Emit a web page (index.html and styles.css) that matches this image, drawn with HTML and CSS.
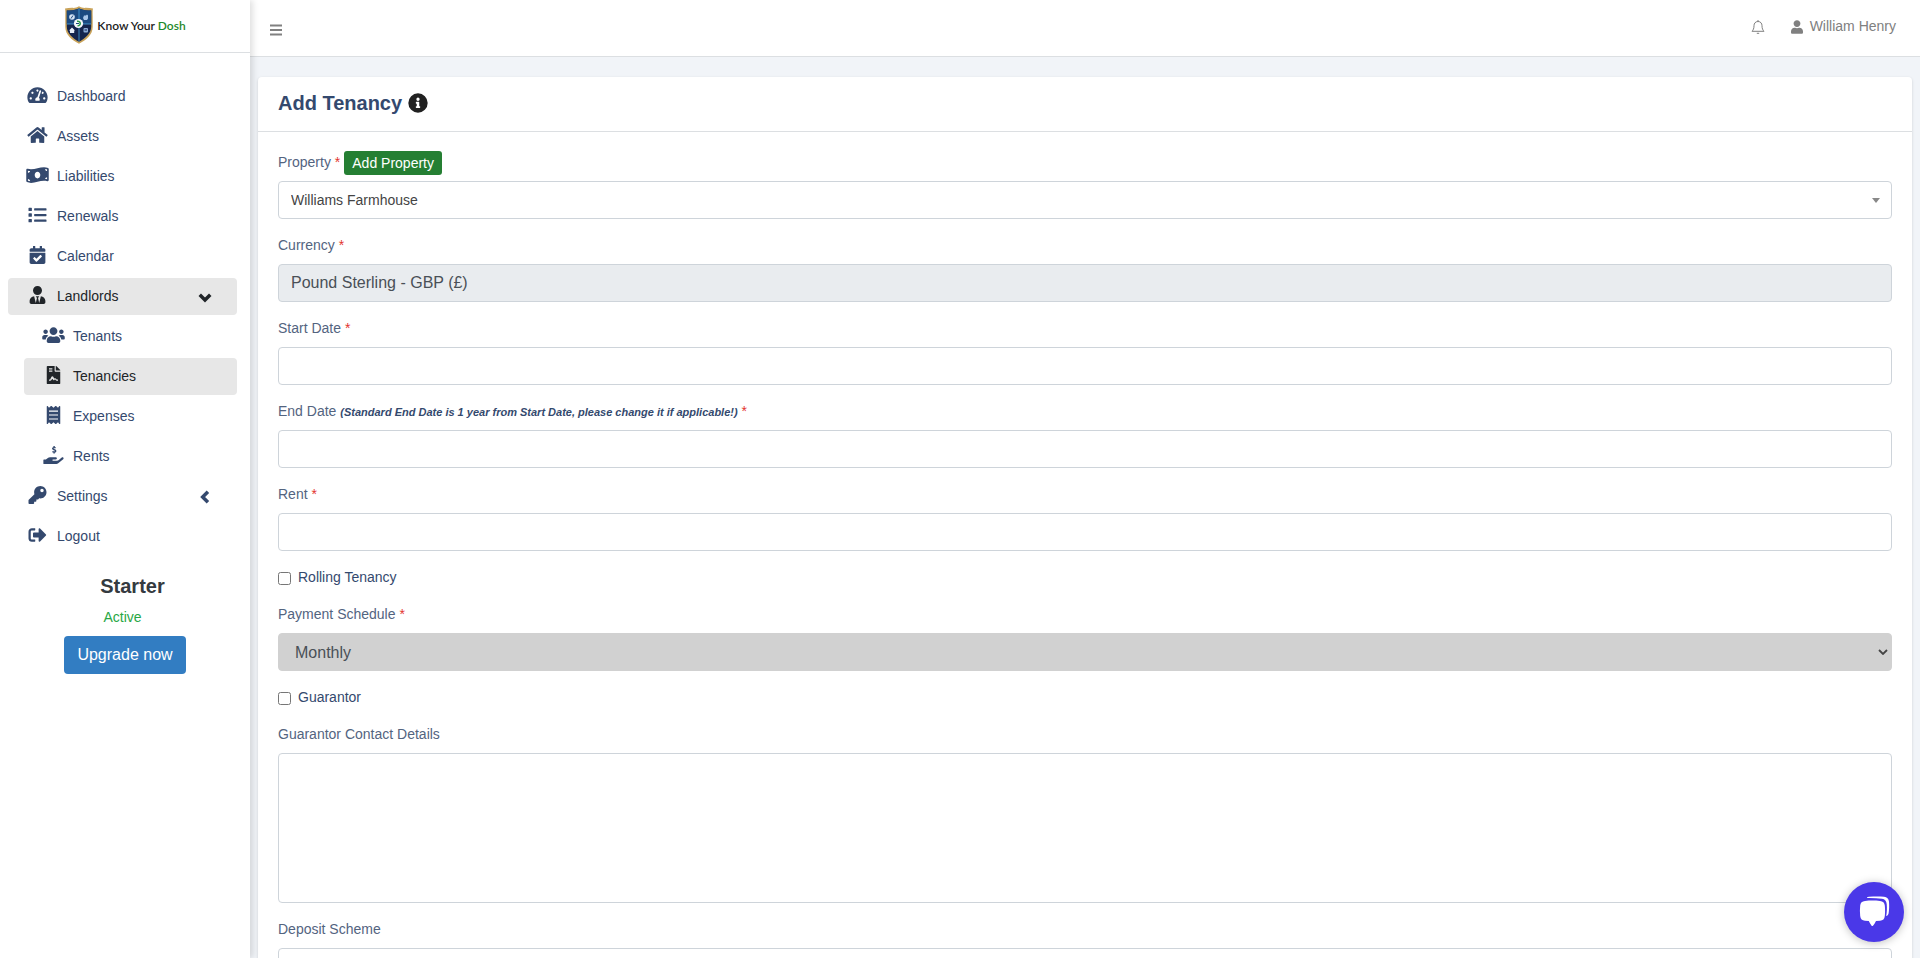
FILE: index.html
```html
<!DOCTYPE html>
<html lang="en">
<head>
  <meta charset="UTF-8" />
  <meta name="viewport" content="width=device-width, initial-scale=1" />
  <title>Add Tenancy - Know Your Dosh</title>
  <link rel="stylesheet" href="styles.css">
</head>
<body>
  <div class="wrapper">
    <aside class="sidebar">
      <a href="#" class="brand">
        <svg class="brand-logo" viewBox="0 0 30 38">
          <path d="M15 .2c2.500 1.500 4.500 2 7 1.600 2.500.2 4.500.4 7 .7-.6 3-.3 5-.3 8V21c0 8-6.700 13-13.700 16.800C8 34 1.300 29 1.300 21V10.500c0-3 .3-5-.3-8 2.500-.3 4.500-.5 7-.7 2.500.4 4.500-.1 7-1.600z" fill="#c9a35a"/>
          <path d="M15 2.500c4 1.700 8 2 12.200 2V20.500C27.200 27.500 21 32.500 15 35.800 9 32.500 2.800 27.500 2.800 20.500V4.500C7 4.500 11 4.200 15 2.500z" fill="#15254d"/>
          <path d="M15 2.500c4 1.700 8 2 12.200 2V18H2.800V4.500C7 4.500 11 4.200 15 2.500z" fill="#1c4a80"/>
          <path d="M15 2.500v33M3 18h24" stroke="#4aa3dc" stroke-width=".8"/>
          <circle cx="8" cy="11" r="2.800" fill="#d5e3f3"/>
          <path d="M7 12.500l2-3" stroke="#1c4a80"/>
          <path d="M20 9.500h2l1-1 1 1v3l-1 1.500h-3l-1-2z" fill="#a9c6e8"/>
          <circle cx="14.500" cy="17.500" r="4.600" fill="#f4f8fb"/>
          <path d="M13 15.200c4-.4 4.500 4.500.5 4.600" stroke="#2c9a49" stroke-width="1.500" fill="none"/>
          <path d="M12 17.500h3" stroke="#1c4a80"/>
          <path d="M5 24.500l3-3 3 3h-.8V27H6v-2.500z" fill="#e6edf7"/>
          <rect x="19.500" y="22" width="4.500" height="4.500" rx="1" fill="#8cabd6"/>
          <path d="M20.500 24h2.500" stroke="#15254d"/>
        </svg>
        <span class="brand-text">Know Your <span class="brand-green">Dosh</span></span>
      </a>

      <nav class="menu">
        <a href="#" class="menu-item">
          <svg class="icon" viewBox="0 0 576 512"><path d="M288 32C128.940 32 0 160.940 0 320c0 52.800 14.250 102.260 39.060 144.800 5.610 9.620 16.300 15.200 27.440 15.200h443c11.140 0 21.830-5.580 27.440-15.200C561.750 422.260 576 372.800 576 320c0-159.060-128.940-288-288-288zm0 64c14.710 0 26.580 10.130 30.320 23.650-1.110 2.260-2.640 4.230-3.450 6.670l-9.220 27.670c-5.130 3.490-10.970 6.010-17.640 6.010-17.670 0-32-14.330-32-32S270.330 96 288 96zM96 384c-17.670 0-32-14.330-32-32s14.330-32 32-32 32 14.330 32 32-14.330 32-32 32zm48-160c-17.670 0-32-14.330-32-32s14.330-32 32-32 32 14.330 32 32-14.330 32-32 32zm246.770-72.410l-61.330 184C343.130 347.330 352 364.540 352 384c0 11.720-3.380 22.550-8.880 32H232.880c-5.500-9.450-8.880-20.280-8.880-32 0-33.940 26.500-61.430 59.900-63.590l61.340-184.010c4.170-12.560 17.730-19.450 30.360-15.170 12.570 4.190 19.350 17.790 15.170 30.360zm14.660 57.200l15.520-46.550c3.470-1.290 7.130-2.230 11.050-2.230 17.670 0 32 14.330 32 32s-14.330 32-32 32c-11.380-.010-20.890-6.280-26.570-15.220zM480 384c-17.670 0-32-14.330-32-32s14.330-32 32-32 32 14.330 32 32-14.330 32-32 32z"/></svg>
          <span>Dashboard</span>
        </a>
        <a href="#" class="menu-item">
          <svg class="icon" viewBox="0 0 576 512"><path d="M280.370 148.260L96 300.110V464a16 16 0 0 0 16 16l112.060-.290a16 16 0 0 0 15.920-16V368a16 16 0 0 1 16-16h64a16 16 0 0 1 16 16v95.640a16 16 0 0 0 16 16.050L464 480a16 16 0 0 0 16-16V300L295.670 148.260a12.190 12.190 0 0 0-15.300 0zM571.600 251.470L488 182.560V44.050a12 12 0 0 0-12-12h-56a12 12 0 0 0-12 12v72.610L318.470 43a48 48 0 0 0-61 0L4.340 251.470a12 12 0 0 0-1.600 16.900l25.500 31A12 12 0 0 0 45.150 301l235.220-193.740a12.190 12.190 0 0 1 15.300 0L530.900 301a12 12 0 0 0 16.900-1.600l25.500-31a12 12 0 0 0-1.700-16.930z"/></svg>
          <span>Assets</span>
        </a>
        <a href="#" class="menu-item">
          <svg class="icon" viewBox="0 0 640 512"><path d="M621.160 54.460C582.370 38.190 543.550 32 504.750 32c-123.170-.010-246.330 62.340-369.500 62.340-30.890 0-61.760-3.920-92.650-13.720-3.470-1.100-6.950-1.620-10.350-1.620C15.040 79 0 92.320 0 110.810v317.260c0 12.630 7.230 24.600 18.840 29.460C57.630 473.810 96.450 480 135.250 480c123.170 0 246.340-62.350 369.510-62.350 30.890 0 61.760 3.920 92.650 13.720 3.470 1.100 6.950 1.620 10.350 1.620 17.210 0 32.250-13.320 32.250-31.810V83.930c-.010-12.640-7.240-24.600-18.850-29.470zM48 132.220c20.120 5.040 41.120 7.570 62.720 8.930C104.840 170.540 79 192.690 48 192.690v-60.470zm0 285v-47.780c34.370 0 62.180 27.270 63.710 61.400-22.530-1.810-43.590-6.310-63.710-13.620zM320 352c-44.190 0-80-42.990-80-96 0-53.020 35.820-96 80-96s80 42.980 80 96c0 53.030-35.830 96-80 96zm272 27.780c-17.520-4.390-35.710-6.850-54.320-8.440 5.870-26.080 27.500-45.880 54.320-49.280v57.720zm0-236.110c-30.890-3.910-54.860-29.700-55.810-61.550 19.540 2.170 38.090 6.230 55.810 12.660v48.890z"/></svg>
          <span>Liabilities</span>
        </a>
        <a href="#" class="menu-item">
          <svg class="icon" viewBox="0 0 512 512"><path d="M16 48h64a16 16 0 0 1 16 16v64a16 16 0 0 1-16 16H16a16 16 0 0 1-16-16V64a16 16 0 0 1 16-16zm0 160h64a16 16 0 0 1 16 16v64a16 16 0 0 1-16 16H16a16 16 0 0 1-16-16v-64a16 16 0 0 1 16-16zm0 160h64a16 16 0 0 1 16 16v64a16 16 0 0 1-16 16H16a16 16 0 0 1-16-16v-64a16 16 0 0 1 16-16zM176 64h320a16 16 0 0 1 16 16v32a16 16 0 0 1-16 16H176a16 16 0 0 1-16-16V80a16 16 0 0 1 16-16zm0 160h320a16 16 0 0 1 16 16v32a16 16 0 0 1-16 16H176a16 16 0 0 1-16-16v-32a16 16 0 0 1 16-16zm0 160h320a16 16 0 0 1 16 16v32a16 16 0 0 1-16 16H176a16 16 0 0 1-16-16v-32a16 16 0 0 1 16-16z"/></svg>
          <span>Renewals</span>
        </a>
        <a href="#" class="menu-item">
          <svg class="icon" viewBox="0 0 448 512"><path d="M436 160H12c-6.627 0-12-5.373-12-12v-36c0-26.510 21.490-48 48-48h48V12c0-6.627 5.373-12 12-12h40c6.627 0 12 5.373 12 12v52h128V12c0-6.627 5.373-12 12-12h40c6.627 0 12 5.373 12 12v52h48c26.510 0 48 21.490 48 48v36c0 6.627-5.373 12-12 12zM12 192h424c6.627 0 12 5.373 12 12v260c0 26.510-21.490 48-48 48H48c-26.510 0-48-21.490-48-48V204c0-6.627 5.373-12 12-12zm333.296 95.947l-28.169-28.398c-4.667-4.705-12.265-4.736-16.970-.068L194.120 364.665l-45.980-46.352c-4.667-4.705-12.266-4.736-16.971-.068l-28.397 28.170c-4.705 4.667-4.736 12.265-.068 16.970l82.601 83.269c4.667 4.705 12.265 4.736 16.970.068l142.953-141.805c4.705-4.667 4.736-12.265.068-16.970z"/></svg>
          <span>Calendar</span>
        </a>
        <a href="#" class="menu-item active">
          <svg class="icon" viewBox="0 0 448 512"><path d="M224 256c70.700 0 128-57.300 128-128S294.700 0 224 0 96 57.300 96 128s57.300 128 128 128zm95.800 32.600L272 480l-32-136 32-56h-96l32 56-32 136-47.800-191.400C56.900 292 0 350.300 0 422.400V464c0 26.500 21.500 48 48 48h352c26.500 0 48-21.500 48-48v-41.600c0-72.100-56.900-130.400-128.200-133.800z"/></svg>
          <span>Landlords</span>
          <svg class="arrow" viewBox="0 0 12 12"><path d="M1.500 4L6 8.500 10.500 4"/></svg>
        </a>
        <div class="submenu">
          <a href="#" class="menu-item">
            <svg class="icon" viewBox="0 0 640 512"><path d="M96 224c35.300 0 64-28.700 64-64s-28.700-64-64-64-64 28.700-64 64 28.700 64 64 64zm448 0c35.300 0 64-28.700 64-64s-28.700-64-64-64-64 28.700-64 64 28.700 64 64 64zm32 32h-64c-17.600 0-33.500 7.100-45.100 18.600 40.300 22.100 68.900 62 75.100 109.400h66c17.700 0 32-14.300 32-32v-32c0-35.300-28.700-64-64-64zm-256 0c61.900 0 112-50.100 112-112S381.900 32 320 32 208 82.100 208 144s50.100 112 112 112zm76.800 32h-8.300c-20.800 10-43.900 16-68.500 16s-47.600-6-68.500-16h-8.300C179.600 288 128 339.600 128 403.200V432c0 26.500 21.500 48 48 48h288c26.500 0 48-21.500 48-48v-28.800c0-63.600-51.600-115.200-115.200-115.200zm-223.700-13.400C161.500 263.100 145.600 256 128 256H64c-35.300 0-64 28.700-64 64v32c0 17.700 14.300 32 32 32h65.900c6.300-47.400 34.900-87.300 75.200-109.400z"/></svg>
            <span>Tenants</span>
          </a>
          <a href="#" class="menu-item active">
            <svg class="icon" viewBox="0 0 384 512"><path fill-rule="evenodd" d="M24 0h200v136a24 24 0 0 0 24 24h136v328a24 24 0 0 1-24 24H24a24 24 0 0 1-24-24V24A24 24 0 0 1 24 0zM64 64v32h96V64zm0 64v32h96v-32zM256 0h6a24 24 0 0 1 17 7l98 98a24 24 0 0 1 7 17v6H256zM64 384v32h30c20 0 36-9 43-25l23-30 25 36c5 14 24 15 31 2 10-19 27-16 31-7 8 16 22 24 42 24h31v-32h-31c-7 0-10-3-13-6-14-29-43-36-64-21l-27-50c-8-23-42-23-50 0l-29 58c-2 8-5 19-12 19z"/></svg>
            <span>Tenancies</span>
          </a>
          <a href="#" class="menu-item">
            <svg class="icon" viewBox="0 0 384 512"><path fill-rule="evenodd" d="M358.400 3.200L320 48 265.600 3.200a15.900 15.900 0 0 0-19.200 0L192 48 137.600 3.200a15.900 15.900 0 0 0-19.200 0L64 48 25.600 3.200C15-4.700 0 2.800 0 16v480c0 13.200 15 20.700 25.600 12.800L64 464l54.400 44.800a15.900 15.900 0 0 0 19.200 0L192 464l54.400 44.800a15.900 15.900 0 0 0 19.200 0L320 464l38.400 44.800c10.500 7.900 25.600.4 25.600-12.800V16c0-13.200-15-20.700-25.600-12.800zM64 128h256v32H64zm0 112h256v32H64zm0 112h256v32H64z"/></svg>
            <span>Expenses</span>
          </a>
          <a href="#" class="menu-item">
            <svg class="icon" viewBox="0 0 576 512"><path d="M565.300 328.100c-11.800-10.700-30.200-10-42.600 0L430.300 402c-11.300 9.100-25.400 14-40 14H272c-8.800 0-16-7.200-16-16s7.200-16 16-16h78.300c15.900 0 30.700-10.900 33.300-26.600 3.300-20-12.100-37.400-31.600-37.400H192c-27 0-53.100 9.300-74.100 26.300L71.400 384H16c-8.800 0-16 7.200-16 16v96c0 8.800 7.200 16 16 16h356.800c14.500 0 28.600-4.900 40-14L564 377c15.200-12.100 16.400-35.300 1.300-48.900z"/><path d="M348 58c-13-15-82-25-84 16-1 42 88 20 88 66 0 42-72 38-94 16M305 0v48M305 166v46" fill="none" stroke="currentColor" stroke-width="40"/></svg>
            <span>Rents</span>
          </a>
        </div>
        <a href="#" class="menu-item">
          <svg class="icon" viewBox="0 0 512 512"><path d="M512 176.001C512 273.203 433.202 352 336 352c-11.220 0-22.190-1.062-32.827-3.069l-24.012 27.014A23.999 23.999 0 0 1 261.223 384H224v40c0 13.255-10.745 24-24 24h-40v40c0 13.255-10.745 24-24 24H24c-13.255 0-24-10.745-24-24v-78.059c0-6.365 2.529-12.470 7.029-16.971l161.802-161.802C163.108 213.814 160 195.271 160 176 160 78.798 238.797.001 335.999 0 433.488-.001 512 78.511 512 176.001zM336 128c0 26.510 21.490 48 48 48s48-21.490 48-48-21.490-48-48-48-48 21.490-48 48z"/></svg>
          <span>Settings</span>
          <svg class="arrow" viewBox="0 0 12 12"><path d="M8.500 1.500L4 6l4.500 4.500"/></svg>
        </a>
        <a href="#" class="menu-item">
          <svg class="icon" viewBox="0 0 512 512"><path d="M497 273L329 441c-15 15-41 4.500-41-17v-96H152c-13.300 0-24-10.700-24-24v-96c0-13.300 10.700-24 24-24h136V88c0-21.400 25.900-32 41-17l168 168c9.300 9.400 9.300 24.600 0 34zM192 436v-40c0-6.600-5.400-12-12-12H96c-17.700 0-32-14.300-32-32V160c0-17.700 14.300-32 32-32h84c6.600 0 12-5.400 12-12V76c0-6.600-5.400-12-12-12H96c-53 0-96 43-96 96v192c0 53 43 96 96 96h84c6.600 0 12-5.400 12-12z"/></svg>
          <span>Logout</span>
        </a>
      </nav>

      <div class="plan">
        <h4 class="plan-name">Starter</h4>
        <span class="plan-status">Active</span>
        <button type="button" class="btn btn-primary">Upgrade now</button>
      </div>
    </aside>

    <div class="page">
      <header class="topbar">
        <button type="button" class="icon-btn" aria-label="Toggle menu">
          <svg class="bars" viewBox="0 0 12 12"><path d="M0 1.500h12M0 6h12M0 10.500h12"/></svg>
        </button>
        <div class="topbar-right">
          <button type="button" class="icon-btn" aria-label="Notifications">
            <svg class="bell" viewBox="0 0 14 16"><path d="M7 1v1.500M7 2.500c-2.600 0-4 1.900-4 4.200 0 3-.8 4.300-2 5.600h12c-1.200-1.300-2-2.600-2-5.600 0-2.300-1.400-4.200-4-4.200zM5.800 14.300h2.400"/></svg>
          </button>
          <a href="#" class="user">
            <svg class="user-icon" viewBox="0 0 448 512"><path d="M224 256c70.700 0 128-57.300 128-128S294.700 0 224 0 96 57.300 96 128s57.300 128 128 128zm90 32h-17c-22 10-47 16-73 16s-51-6-73-16h-17C60 288 0 348 0 422v42c0 26.500 21.500 48 48 48h352c26.500 0 48-21.500 48-48v-42c0-74-60-134-134-134z"/></svg>
            <span>William Henry</span>
          </a>
        </div>
      </header>

      <main class="card">
        <div class="card-header">
          <h1 class="card-title">Add Tenancy</h1>
          <svg class="info" viewBox="0 0 512 512"><path fill-rule="evenodd" d="M256 8a248 248 0 1 0 0 496 248 248 0 0 0 0-496zm0 110a42 42 0 1 1 0 84 42 42 0 0 1 0-84zm56 254a12 12 0 0 1-12 12h-88a12 12 0 0 1-12-12v-24a12 12 0 0 1 12-12h12v-64h-12a12 12 0 0 1-12-12v-24a12 12 0 0 1 12-12h64a12 12 0 0 1 12 12v100h12a12 12 0 0 1 12 12z"/></svg>
        </div>
        <form class="card-body">
          <div class="form-group">
            <div class="label-row">
              <label for="property">Property <span class="required">*</span></label>
              <button type="button" class="btn btn-success">Add Property</button>
            </div>
            <select id="property" class="form-control select-search">
              <option>Williams Farmhouse</option>
            </select>
          </div>
          <div class="form-group">
            <label for="currency">Currency <span class="required">*</span></label>
            <input type="text" id="currency" class="form-control" value="Pound Sterling - GBP (£)" readonly />
          </div>
          <div class="form-group">
            <label for="startDate">Start Date <span class="required">*</span></label>
            <input type="text" id="startDate" class="form-control" />
          </div>
          <div class="form-group">
            <label for="endDate">End Date <em class="hint">(Standard End Date is 1 year from Start Date, please change it if applicable!)</em> <span class="required">*</span></label>
            <input type="text" id="endDate" class="form-control" />
          </div>
          <div class="form-group">
            <label for="rent">Rent <span class="required">*</span></label>
            <input type="text" id="rent" class="form-control" />
          </div>
          <div class="form-check">
            <input type="checkbox" id="rolling" />
            <label for="rolling">Rolling Tenancy</label>
          </div>
          <div class="form-group">
            <label for="schedule">Payment Schedule <span class="required">*</span></label>
            <select id="schedule" class="form-control select-disabled" disabled>
              <option>Monthly</option>
            </select>
          </div>
          <div class="form-check">
            <input type="checkbox" id="guarantor" />
            <label for="guarantor">Guarantor</label>
          </div>
          <div class="form-group">
            <label for="guarantorDetails">Guarantor Contact Details</label>
            <textarea id="guarantorDetails" class="form-control"></textarea>
          </div>
          <div class="form-group">
            <label for="deposit">Deposit Scheme</label>
            <input type="text" id="deposit" class="form-control" />
          </div>
        </form>
      </main>
    </div>
  </div>

  <button type="button" class="chat" aria-label="Open chat">
    <svg viewBox="0 0 32 32"><path d="M9 1.500Q9.500.8 11 .8c6-.5 11-.4 15 0 3 .3 4.800 2 5 5 .3 4 .2 8-.3 11-.2 2-1.200 3-2.500 3.200.8-4 .9-8 .5-12-.3-3-1.700-4.700-4.700-5.200-4.500-.7-9.500-.9-15-.8z"/><path d="M7 5c5-.6 10-.6 15 0 3 .3 4.500 1.800 4.800 4.500.4 4 .4 7 0 10.500-.3 3-1.800 4.500-4.800 4.800l-4 .3c-1 2-2 3.500-3 4.600-.5.5-1 .5-1.400 0-1-1.200-2-2.700-2.800-4.600L7 24.800C4 24.500 2.500 23 2.200 20c-.4-3.500-.4-7 0-10.500C2.500 6.800 4 5.300 7 5z"/></svg>
  </button>
</body>
</html>
```

FILE: styles.css
```css
* {
  box-sizing: border-box;
}

body {
  margin: 0;
  font-family: "Liberation Sans", Arial, sans-serif;
  font-size: 14px;
  line-height: 21px;
  color: #34496e;
  background-color: #f1f4f8;
}

a {
  color: inherit;
  text-decoration: none;
}

button,
input,
select,
textarea {
  font-family: inherit;
}

.wrapper {
  display: flex;
  height: 100vh;
  overflow: hidden;
}

/* Sidebar */
.sidebar {
  flex: 0 0 250px;
  background-color: #fff;
  box-shadow: 3px 0 6px rgba(0, 0, 0, 0.12);
  z-index: 1;
}

.brand {
  display: flex;
  align-items: center;
  justify-content: center;
  gap: 3px;
  height: 53px;
  padding-bottom: 2px;
  border-bottom: 1px solid #dcdfe2;
}

.brand-logo {
  width: 30px;
  height: 38px;
}

.brand-text {
  font-family: Lato, sans-serif;
  font-size: 12px;
  font-weight: 600;
  color: #222;
}

.brand-green {
  color: #1f8a2c;
}

.menu {
  padding: 25px 13px 0 8px;
}

.menu-item {
  display: flex;
  align-items: center;
  height: 37px;
  margin-bottom: 3px;
  padding-left: 18px;
  padding-right: 25px;
  border-radius: 4px;
}

.menu-item.active {
  color: #212529;
  background-color: #e7e7e7;
}

.icon {
  width: 23px;
  height: 18px;
  margin-right: 8px;
  margin-bottom: 4px;
  fill: currentColor;
}

.arrow {
  width: 14px;
  height: 14px;
  margin-left: auto;
  fill: none;
  stroke: currentColor;
  stroke-width: 3;
}

.submenu {
  padding-left: 16px;
}

.plan {
  display: flex;
  flex-direction: column;
  align-items: center;
  padding-top: 16px;
}

.plan-name {
  margin: 0 0 9px;
  padding-left: 15px;
  font-size: 20px;
  line-height: 24px;
  color: #343a40;
}

.plan-status {
  margin-bottom: 8px;
  padding-right: 5px;
  color: #28a745;
}

.btn {
  border: none;
  border-radius: 4px;
  color: #fff;
  cursor: pointer;
}

.btn-primary {
  padding: 0 13px;
  height: 38px;
  font-size: 16px;
  background-color: #327dc2;
}

.btn-success {
  height: 24px;
  padding: 0 8px;
  font-size: 14px;
  border-radius: 3px;
  background-color: #257f33;
}

/* Top bar */
.page {
  flex: 1;
  min-width: 0;
}

.topbar {
  display: flex;
  align-items: center;
  justify-content: space-between;
  height: 57px;
  padding: 0 24px 0 20px;
  color: #808080;
  background-color: #fff;
  border-bottom: 1px solid #dcdfe2;
}

.icon-btn {
  display: flex;
  padding: 0;
  border: none;
  background: none;
  color: inherit;
  cursor: pointer;
}

.bars {
  width: 12px;
  height: 12px;
  margin-top: 3px;
  stroke: currentColor;
  stroke-width: 2;
}

.bell {
  width: 14px;
  height: 16px;
  fill: none;
  stroke: currentColor;
}

.topbar-right {
  display: flex;
  align-items: center;
  gap: 26px;
  padding-bottom: 3px;
}

.user {
  display: flex;
  align-items: center;
  gap: 7px;
}

.user-icon {
  width: 12px;
  height: 14px;
  fill: currentColor;
}

/* Form card */
.card {
  margin: 20px 8px 0;
  background-color: #fff;
  border-radius: 4px;
  box-shadow: 0 1px 3px rgba(0, 0, 0, 0.15);
}

.card-header {
  display: flex;
  align-items: center;
  gap: 6px;
  height: 55px;
  padding: 0 20px 2px;
  border-bottom: 1px solid #dcdfe2;
}

.card-title {
  margin: 0;
  font-size: 20px;
  line-height: 24px;
}

.info {
  width: 20px;
  height: 20px;
  fill: #212121;
}

.card-body {
  padding: 20px;
}

.form-group {
  margin-bottom: 16px;
}

.form-group label {
  display: block;
  margin-bottom: 8px;
  color: #53647f;
}

.label-row {
  display: flex;
  align-items: center;
  gap: 4px;
  height: 21px;
  margin-bottom: 8px;
}

.form-group .label-row label {
  margin: 0;
}

.required {
  color: #e3342f;
}

.hint {
  font-size: 11px;
  line-height: 1;
  font-weight: bold;
  color: #34496e;
}

.form-control {
  display: block;
  width: 100%;
  height: 38px;
  padding: 6px 12px;
  font-size: 16px;
  color: #495057;
  background-color: #fff;
  border: 1px solid #ced4da;
  border-radius: 4px;
}

.form-control[readonly] {
  background-color: #e9ecef;
}

.select-search {
  appearance: none;
  font-size: 14px;
  color: #444;
  background: #fff url("data:image/svg+xml,%3Csvg xmlns='http://www.w3.org/2000/svg' viewBox='0 0 8 5'%3E%3Cpath d='M0 0h8L4 5z' fill='%23888'/%3E%3C/svg%3E") no-repeat right 11px center / 8px 5px;
}

.select-disabled {
  appearance: none;
  padding-left: 16px;
  opacity: 1;
  border-color: #d1d1d1;
  background: #d1d1d1 url("data:image/svg+xml,%3Csvg xmlns='http://www.w3.org/2000/svg' viewBox='0 0 10 6'%3E%3Cpath d='M1 1l4 4 4-4' fill='none' stroke='%23444' stroke-width='1.800'/%3E%3C/svg%3E") no-repeat right 3px center / 10px 6px;
}

textarea.form-control {
  height: 150px;
  resize: none;
}

.form-check {
  display: flex;
  align-items: center;
  gap: 7px;
  height: 21px;
  margin-bottom: 16px;
}

.form-check input {
  width: 13px;
  height: 13px;
  margin: 2px 0 0;
}

/* Chat launcher */
.chat {
  position: fixed;
  right: 16px;
  bottom: 16px;
  display: flex;
  align-items: center;
  justify-content: center;
  width: 60px;
  height: 60px;
  padding: 0;
  border: none;
  border-radius: 50%;
  background-color: #4a38e8;
  box-shadow: 0 1px 8px rgba(0, 0, 0, 0.25);
  cursor: pointer;
  z-index: 2;
}

.chat svg {
  width: 32px;
  height: 32px;
  fill: #fff;
}
```
